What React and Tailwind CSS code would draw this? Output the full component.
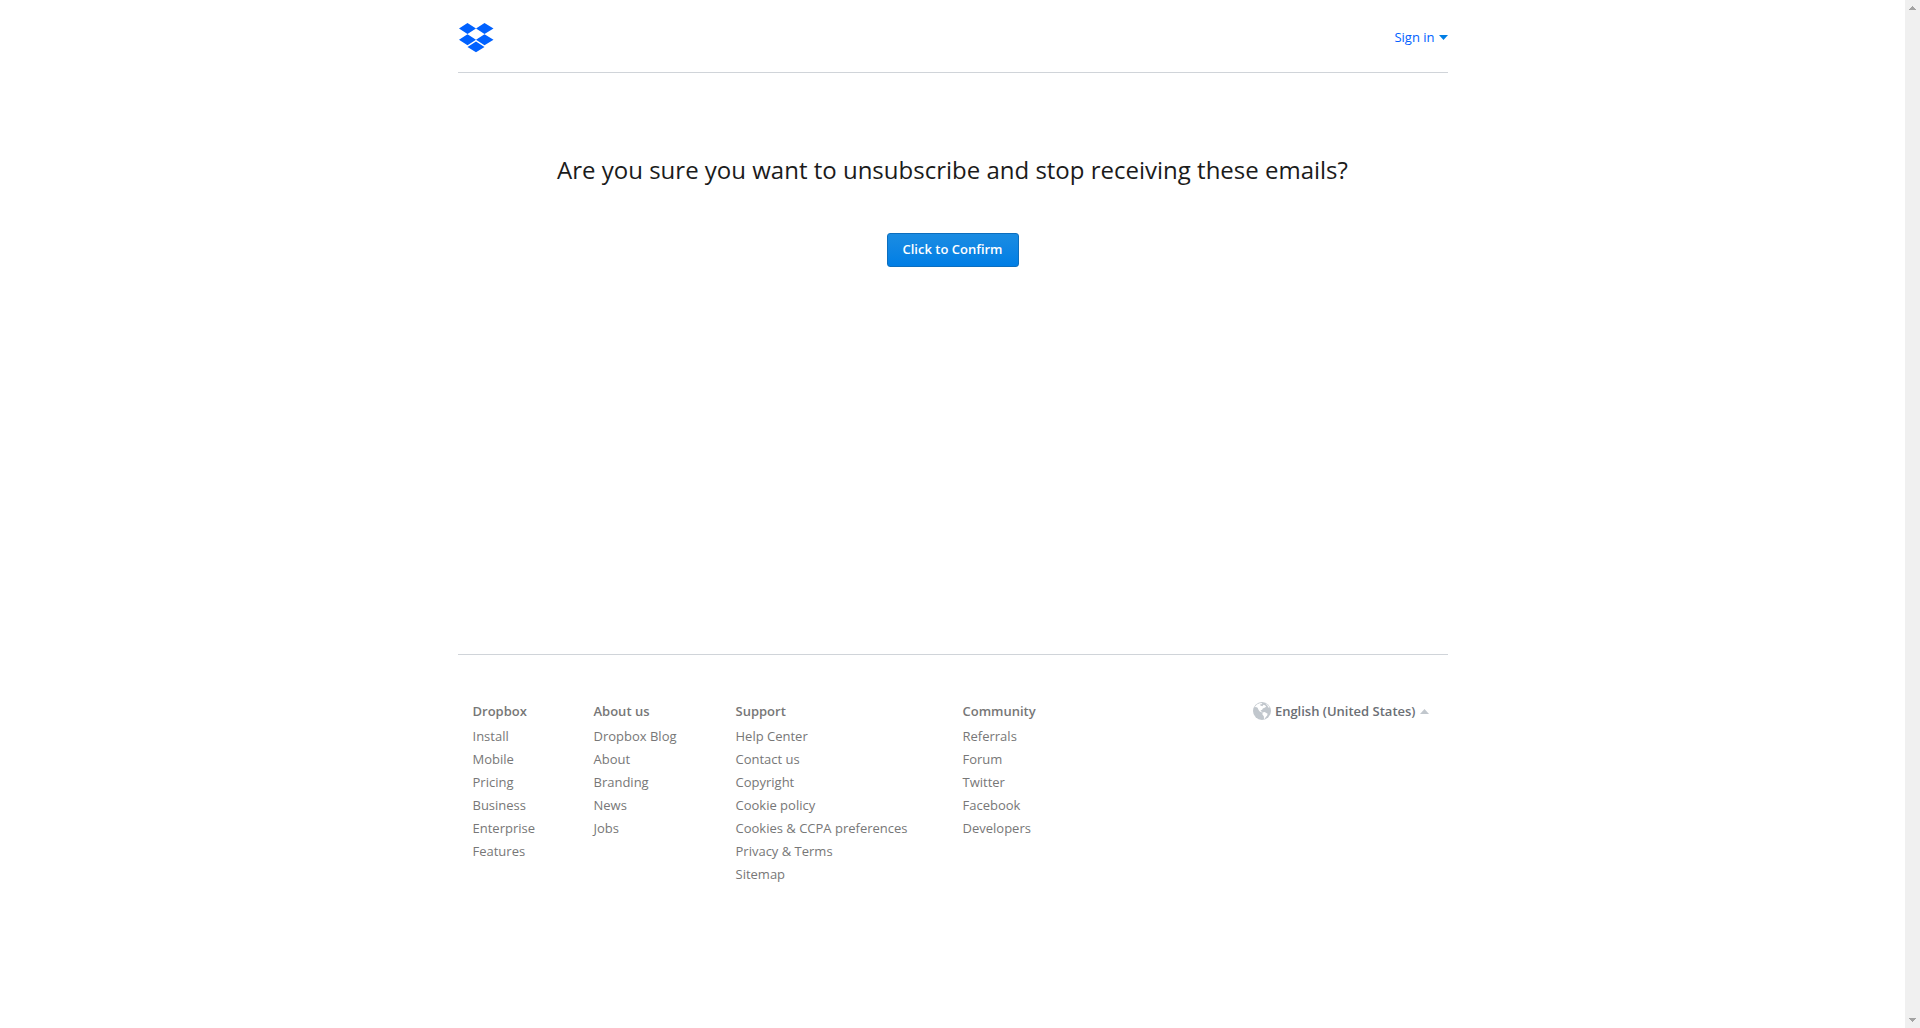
const columns = [
  { title: 'Dropbox', links: ['Install', 'Mobile', 'Pricing', 'Business', 'Enterprise', 'Features'] },
  { title: 'About us', links: ['Dropbox Blog', 'About', 'Branding', 'News', 'Jobs'] },
  {
    title: 'Support',
    links: ['Help Center', 'Contact us', 'Copyright', 'Cookie policy', 'Cookies & CCPA preferences', 'Privacy & Terms', 'Sitemap'],
  },
  { title: 'Community', links: ['Referrals', 'Forum', 'Twitter', 'Facebook', 'Developers'] },
];

function Logo() {
  return (
    <svg className="h-[30px] w-9" viewBox="0 0 36 30" fill="#0061ff" aria-hidden="true">
      <path d="M9.500 0 18 5.500 9.500 11 1 5.500zM26.500 0 35.500 5.500 26.500 11 18 5.500zM9.500 11.200 18 16.700 9.500 22.200 1 16.700zM26.500 11.200 35.500 16.700 26.500 22.200 18 16.700zM18 18.400 26.500 23.900 18 29.300 9.500 23.900z" />
    </svg>
  );
}

function Globe() {
  return (
    <svg className="h-[18px] w-[18px]" viewBox="0 0 18 18" aria-hidden="true">
      <circle cx="9" cy="9" r="9" fill="#c1c7cd" />
      <path
        fill="#fff"
        d="M1.500 5.200 3.800 2.600 6.600 1.200 9.400 1 8.600 2.200 7 2.600 7.400 3.600 9.400 4.200 10.400 2.800 12 3.200 13.200 4.800 11.600 5.800 9.800 6.600 9 8 7.600 8.200 8.200 9.400 9.600 10 9 10.400 6.800 9.600 5.600 8 4.600 5.800 3 5zM9.600 10.400 11.600 10 14.600 11.800 14.200 13.600 12.600 15.200 11.800 17 11 16.600 10.800 14.200 9.400 12.400zM12.200 1.200 14 2.200 15.600 3.800 16.600 6.200 15.200 5.200 14.400 3.400z"
      />
    </svg>
  );
}

function ScrollTrack() {
  return (
    <div className="flex w-[15px] shrink-0 flex-col items-center justify-between bg-[#f0f0f0] py-1.5" aria-hidden="true">
      <svg className="h-1 w-[7px]" viewBox="0 0 7 4" fill="#a3a3a3" shapeRendering="crispEdges">
        <path d="M3 0h1v1h1v1h1v1h1v1H0V3h1V2h1V1h1z" />
      </svg>
      <svg className="h-1 w-[7px]" viewBox="0 0 7 4" fill="#a3a3a3" shapeRendering="crispEdges">
        <path d="M0 0h7v1H6v1H5v1H4v1H3V3H2V2H1V1H0z" />
      </svg>
    </div>
  );
}

export default function App() {
  return (
    <div className="flex min-h-screen bg-white font-['Open_Sans',sans-serif] text-[13px]">
      <div className="min-w-0 flex-1">
        <div className="mx-auto max-w-[990px]">
          <header className="flex items-start justify-between border-b border-[#d0d4d9] pt-[23px] pb-[19px]">
            <a href="#home" aria-label="Dropbox">
              <Logo />
            </a>
            <button type="button" className="flex items-center gap-1 pt-1 leading-5 text-[#0061ff]">
              Sign in
              <svg className="h-[5px] w-[9px]" viewBox="0 0 9 5" fill="#007ee5" aria-hidden="true">
                <path d="M0 0h9L4.500 5z" />
              </svg>
            </button>
          </header>

          <main className="flex min-h-[581px] flex-col items-center pt-[81px]">
            <h1 className="text-2xl leading-8 text-[#1b1b1b]">
              Are you sure you want to unsubscribe and stop receiving these emails?
            </h1>
            <button
              type="button"
              className="mt-[47px] h-[34px] rounded-[3px] border border-[#0c6ebe] bg-linear-to-b from-[#1a8ce2] to-[#007ee5] px-[15px] font-semibold text-white"
            >
              Click to Confirm
            </button>
          </main>

          <footer className="flex items-start justify-between border-t border-[#d0d4d9] px-[15px] pt-[45px] pb-16 text-[#777]">
            <nav className="grid grid-cols-[121px_142px_227px_auto]" aria-label="Footer">
              {columns.map((column) => (
                <section key={column.title}>
                  <h2 className="mb-0.5 leading-[23px] font-semibold">{column.title}</h2>
                  <ul>
                    {column.links.map((link) => (
                      <li key={link} className="leading-[23px]">
                        <a href="#footer">{link}</a>
                      </li>
                    ))}
                  </ul>
                </section>
              ))}
            </nav>
            <button type="button" className="mr-1 flex items-center gap-1 leading-[22px] font-semibold text-[#6b6f75]">
              <Globe />
              English (United States)
              <svg className="h-[5px] w-[9px]" viewBox="0 0 9 5" fill="#c1c7cd" aria-hidden="true">
                <path d="M4.500 0 9 5H0z" />
              </svg>
            </button>
          </footer>
        </div>
      </div>
      <ScrollTrack />
    </div>
  );
}
